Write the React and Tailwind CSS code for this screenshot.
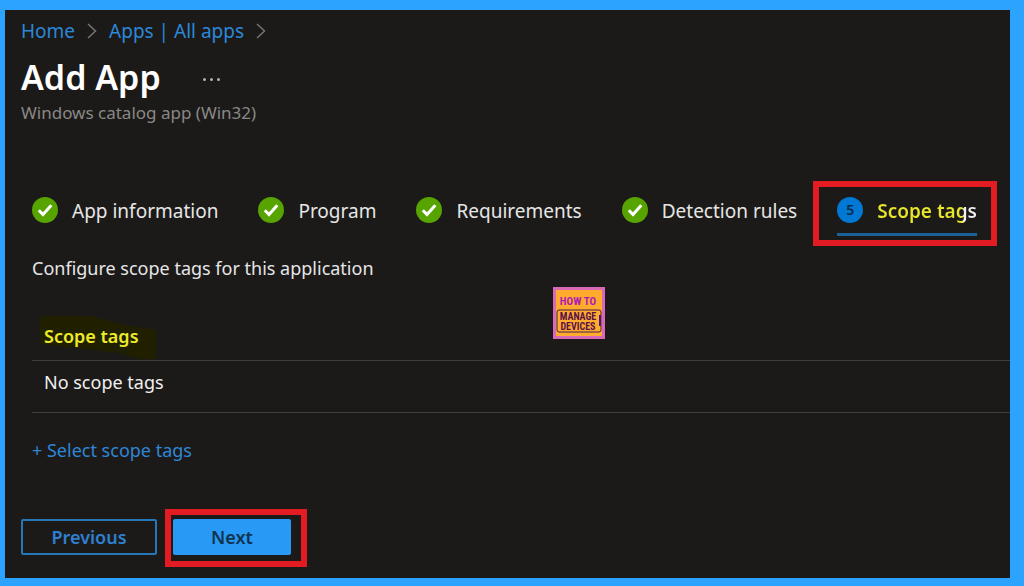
const steps = ["App information", "Program", "Requirements", "Detection rules"];

function CheckCircle() {
  return (
    <svg className="size-[26px] shrink-0" viewBox="0 0 26 26" aria-hidden="true">
      <circle cx="13" cy="13" r="13" fill="#57a300" />
      <path d="M6.8 13.2l4.2 4.3 8.3-9.3" fill="none" stroke="#fff" strokeWidth="3" />
    </svg>
  );
}

function Chevron() {
  return (
    <svg className="h-4 w-2.5" viewBox="0 0 10 16" fill="none" stroke="#777573" strokeWidth="1.5" aria-hidden="true">
      <path d="M1 1l7.5 7L1 15" />
    </svg>
  );
}

function Breadcrumb() {
  return (
    <nav aria-label="Breadcrumb" className="flex items-center gap-3 text-[19px] leading-7 text-[#2b88d8]">
      <a href="#home">Home</a>
      <Chevron />
      <a href="#apps">Apps | All apps</a>
      <Chevron />
    </nav>
  );
}

function Steps() {
  return (
    <ol className="flex gap-10 whitespace-nowrap text-[19px] leading-7 text-[#e6e6e6]">
      {steps.map((step) => (
        <li key={step}>
          <button className="flex items-start gap-3.5">
            <CheckCircle />
            {step}
          </button>
        </li>
      ))}
      <li className="relative">
        <button
          aria-current="step"
          className="flex items-start gap-3.5 border-b-3 border-[#1a6299] pb-2 font-semibold"
        >
          <span className="flex size-[26px] shrink-0 items-center justify-center rounded-full bg-[#0078d4] text-sm text-[#0b2c4a]">
            5
          </span>
          <span className="bg-[linear-gradient(90deg,#e8e62a_86%,#f0f0f0_86%)] bg-clip-text text-transparent">
            Scope tags
          </span>
        </button>
        <span className="pointer-events-none absolute -top-4 -right-5 -bottom-2.5 -left-6 border-6 border-[#e31b23]" />
      </li>
    </ol>
  );
}

function ScopeTable() {
  return (
    <table className="w-full border-collapse text-left text-lg leading-6 text-[#f0f0f0]">
      <thead>
        <tr className="border-b border-[#3f3e3d]">
          <th className="relative h-12 px-3 font-semibold text-[#ecea2c]">
            <svg className="absolute top-1 left-2 h-11 w-[116px]" viewBox="0 0 116 44" aria-hidden="true">
              <path d="M0 0H52L80 8L116 14V43H98L80 37L0 28Z" fill="#201f00" />
            </svg>
            <span className="relative">Scope tags</span>
          </th>
        </tr>
      </thead>
      <tbody>
        <tr className="border-b border-[#3f3e3d]">
          <td className="h-13 px-3 pb-2">No scope tags</td>
        </tr>
      </tbody>
    </table>
  );
}

function Watermark() {
  return (
    <svg className="absolute top-[277px] left-[548px] size-[52px]" viewBox="0 0 52 52" role="img" aria-label="How to manage devices">
      <rect width="52" height="52" fill="#d868b8" />
      <rect x="3" y="3" width="46" height="46" fill="#ffab2e" />
      <g fontFamily="'Roboto Condensed', 'Liberation Sans Narrow', Roboto, sans-serif" fontWeight="700" textAnchor="middle">
        <text x="25" y="18" fontSize="11" fill="#b01bb5">HOW TO</text>
        <rect x="4" y="23" width="44" height="22" rx="2" fill="none" stroke="#4a1d4a" />
        <text x="25" y="33" fontSize="10" fill="#5a1248">MANAGE</text>
        <text x="25" y="43" fontSize="10" fill="#5a1248">DEVICES</text>
      </g>
      <path d="M46 28h2v11h-2z" fill="#4b128f" />
    </svg>
  );
}

export default function App() {
  return (
    <div className="flex min-h-screen flex-col bg-[#2ba3ff] pt-2.5 pr-3.5 pb-2 pl-[5px] font-['Noto_Sans','Open_Sans',sans-serif]">
      <main className="relative flex-1 overflow-hidden bg-[#1b1a19] pt-[7px] pb-5 pl-4">
        <Breadcrumb />
        <div className="mt-2 flex items-center gap-10 text-white">
          <h1 className="text-[34px] leading-12 font-semibold">Add App</h1>
          <button aria-label="More" className="flex gap-1 pt-1 pl-0.5">
            <span className="size-[3px] rounded-full bg-[#b0b0b0]" />
            <span className="size-[3px] rounded-full bg-[#b0b0b0]" />
            <span className="size-[3px] rounded-full bg-[#b0b0b0]" />
          </button>
        </div>
        <p className="text-[17px] leading-6 text-[#8a8886]">Windows catalog app (Win32)</p>

        <section className="mt-18 pl-[11px]">
          <Steps />
          <p className="mt-5 text-lg leading-6 text-[#e6e6e6]">Configure scope tags for this application</p>
          <div className="mt-8">
            <ScopeTable />
          </div>
          <button className="mt-[23px] text-lg leading-7 text-[#2f86d6]">+ Select scope tags</button>
        </section>

        <div className="mt-[55px] flex gap-4 text-lg leading-6 font-semibold">
          <button className="h-9 w-34 rounded-xs border-2 border-[#2577b8] text-[#2f7fd0]">Previous</button>
          <div className="relative">
            <button className="h-9 w-[118px] rounded-xs bg-[#2899f5] text-[#10344f]">Next</button>
            <span className="pointer-events-none absolute -top-2.5 -right-4 -bottom-3 -left-2 border-6 border-[#e31b23]" />
          </div>
        </div>
        <Watermark />
      </main>
    </div>
  );
}
